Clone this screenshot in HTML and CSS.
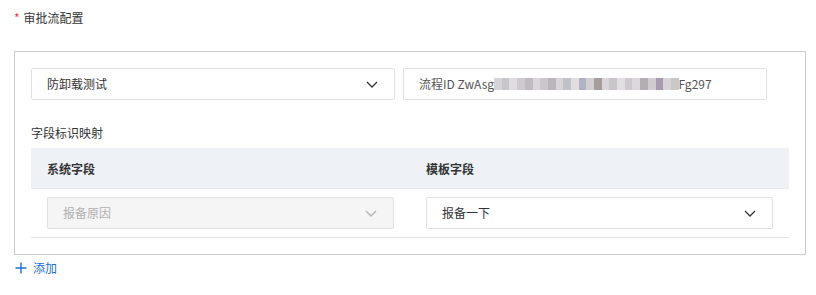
FILE: index.html
```html
<!DOCTYPE html>
<html lang="zh">
<head>
<meta charset="utf-8">
<link rel="stylesheet" href="styles.css">
</head>
<body>
<div class="page">
  <div class="field-label"><span class="req">*</span>审批流配置</div>
  <div class="box">
    <div class="top-row">
      <div class="select">
        <span class="value">防卸载测试</span>
        <svg class="chev" width="12" height="7" viewBox="0 0 12 7"><path d="M1 1l5 5 5-5" fill="none" stroke="#333" stroke-width="1.3"/></svg>
      </div>
      <div class="input">
        <span class="value">流程ID ZwAsg<span class="mask"><i style="background:#d6d3d6"></i><i style="background:#c9c6cb"></i><i style="background:#e0dde0"></i><i style="background:#cfcad0"></i><i style="background:#bdbac0"></i><i style="background:#d9d5d9"></i><i style="background:#cac6cc"></i><i style="background:#b9b5bb"></i><i style="background:#d8d4d8"></i><i style="background:#c3c1c8"></i><i style="background:#e1dde1"></i><i style="background:#b0b3c4"></i><i style="background:#d2ced2"></i><i style="background:#a59d9c"></i><i style="background:#d9d5da"></i><i style="background:#c9c5cb"></i><i style="background:#e2dfe2"></i><i style="background:#ccc8cd"></i><i style="background:#dcd8dc"></i><i style="background:#b2aeb4"></i><i style="background:#cfcbcf"></i><i style="background:#a89aae"></i><i style="background:#d7d4d7"></i><i style="background:#c8c9c6"></i></span>Fg297</span>
      </div>
    </div>
    <div class="sub-label">字段标识映射</div>
    <div class="table">
      <div class="thead">
        <div class="cell">系统字段</div>
        <div class="cell">模板字段</div>
      </div>
      <div class="trow">
        <div class="cell">
          <div class="select disabled">
            <span class="value">报备原因</span>
            <svg class="chev" width="12" height="7" viewBox="0 0 12 7"><path d="M1 1l5 5 5-5" fill="none" stroke="#b3b3b3" stroke-width="1.3"/></svg>
          </div>
        </div>
        <div class="cell">
          <div class="select">
            <span class="value">报备一下</span>
            <svg class="chev" width="12" height="7" viewBox="0 0 12 7"><path d="M1 1l5 5 5-5" fill="none" stroke="#333" stroke-width="1.3"/></svg>
          </div>
        </div>
      </div>
    </div>
  </div>
  <div class="add"><svg width="12" height="12" viewBox="0 0 12 12"><path d="M6 0.5v11M0.5 6h11" stroke="#1b6fd8" stroke-width="1.4" fill="none"/></svg><span>添加</span></div>
</div>
</body>
</html>
```

FILE: styles.css
```css
* { box-sizing: border-box; }
html, body { margin: 0; background: #fff; }
body {
  font-family: "Noto Sans CJK SC", "Noto Sans", sans-serif;
  font-size: 12px;
  color: #333;
}
.page { padding: 8px 14px; }
.field-label {
  line-height: 20px;
  height: 20px;
  color: #333;
}
.req { color: #e53935; margin-right: 4px; }
.box {
  margin-top: 23px;
  width: 792px;
  border: 1px solid #cccccc;
  padding: 16px 16px 16px 16px;
}
.top-row {
  display: flex;
  gap: 8px;
}
.select, .input {
  height: 32px;
  border: 1px solid #e0e0e0;
  border-radius: 2px;
  display: flex;
  align-items: center;
  justify-content: space-between;
  padding: 0 16px 0 15px;
  background: #fff;
}
.top-row .select, .top-row .input { width: 364px; }
.input .value { color: #555; display: flex; align-items: center; }
.value { line-height: 20px; }
.mask { display: inline-flex; height: 12px; margin: 0 0 0 0; }
.mask i { display: block; width: 7.7px; height: 12px; }
.select.disabled { background: #f5f5f5; color: #b0b0b0; }
.sub-label { margin-top: 23px; line-height: 20px; color: #333; }
.table { margin-top: 5px; }
.thead {
  display: grid;
  grid-template-columns: 1fr 1fr;
  background: #eef1f6;
  height: 40px;
  align-items: center;
  font-weight: bold;
}
.cell { padding: 0 16px; }
.trow {
  display: grid;
  grid-template-columns: 1fr 1fr;
  border-top: 1px solid #e6e9ee;
  border-bottom: 1px solid #e0e0e0;
  padding: 8px 0;
}
.add {
  margin-top: 3px;
  display: flex;
  align-items: center;
  gap: 6px;
  color: #1b6fd8;
  line-height: 20px;
  padding-left: 1px;
}
```
